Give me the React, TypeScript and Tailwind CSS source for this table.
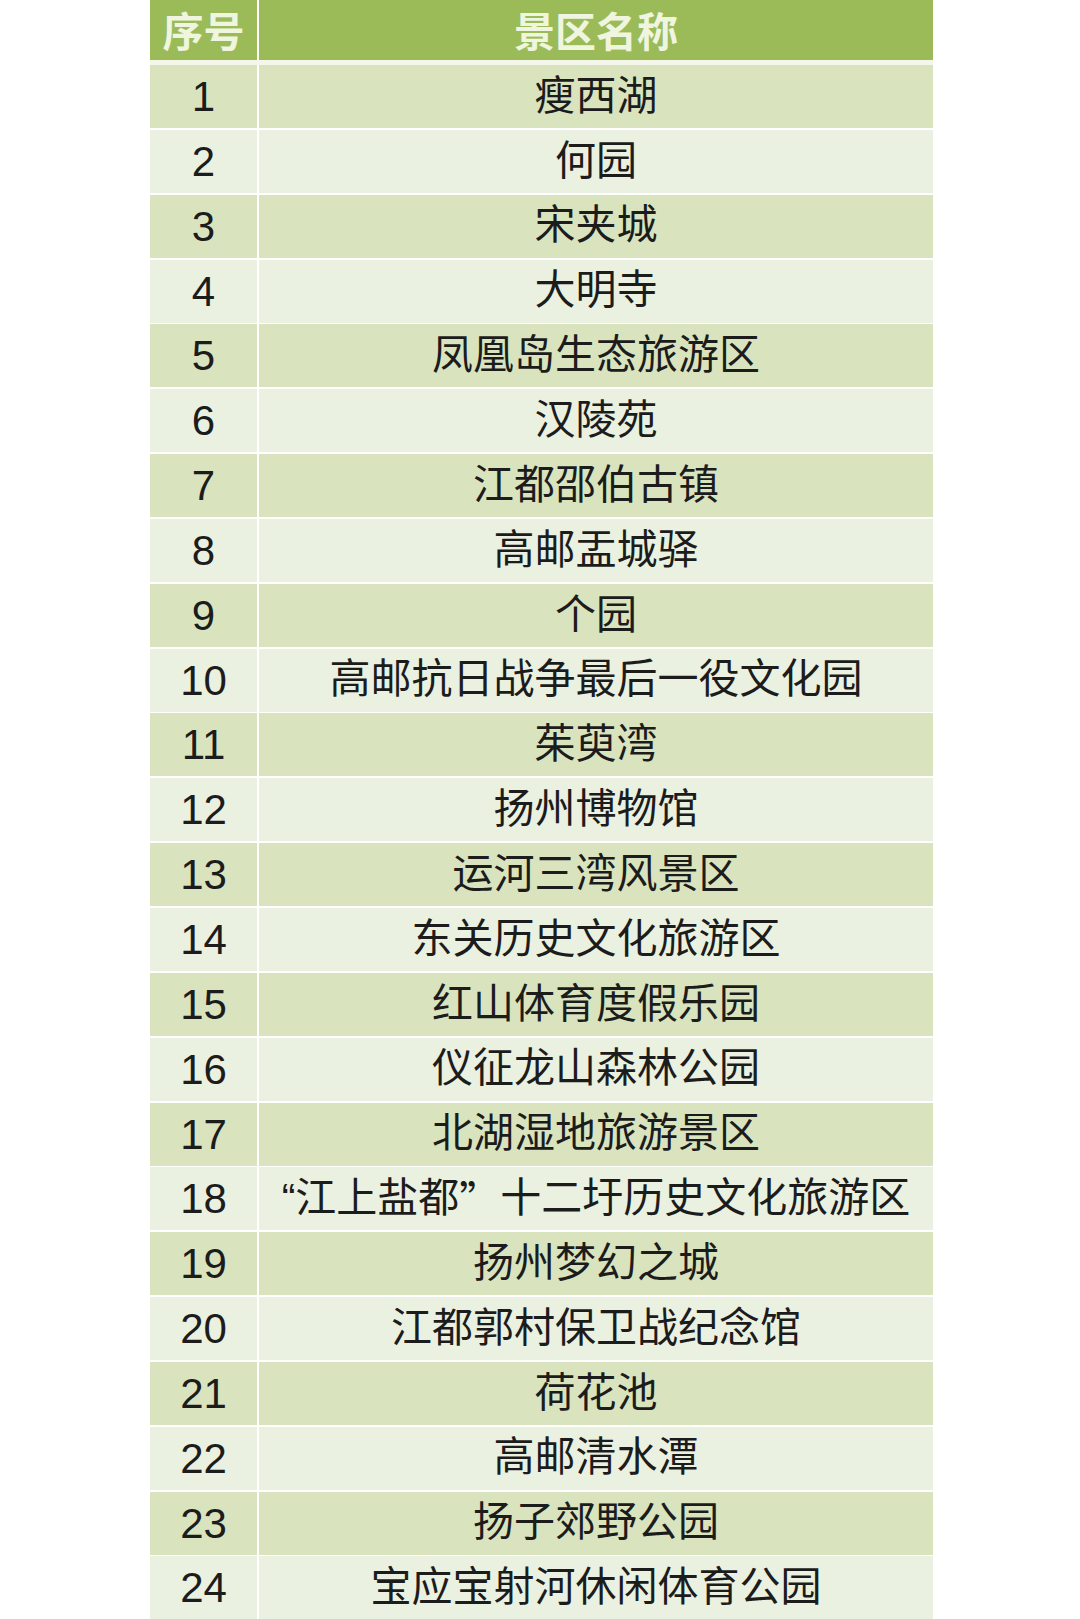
const spots: React.ReactNode[] = [
  "瘦西湖",
  "何园",
  "宋夹城",
  "大明寺",
  "凤凰岛生态旅游区",
  "汉陵苑",
  "江都邵伯古镇",
  "高邮盂城驿",
  "个园",
  "高邮抗日战争最后一役文化园",
  "茱萸湾",
  "扬州博物馆",
  "运河三湾风景区",
  "东关历史文化旅游区",
  "红山体育度假乐园",
  "仪征龙山森林公园",
  "北湖湿地旅游景区",
  <>
    “江上盐都<span style={{ fontFamily: '"Noto Sans CJK SC", sans-serif' }}>”</span>十二圩历史文化旅游区
  </>,
  "扬州梦幻之城",
  "江都郭村保卫战纪念馆",
  "荷花池",
  "高邮清水潭",
  "扬子郊野公园",
  "宝应宝射河休闲体育公园",
];

export default function App() {
  return (
    <div
      className="w-[1080px] h-[1619px] overflow-hidden bg-white pl-[150px]"
      style={{ fontFamily: '"Liberation Sans", "Noto Sans CJK SC", sans-serif' }}
    >
      <div className="w-[783px] flex flex-col">
        {/* header */}
        <div className="grid grid-cols-[107px_1fr] gap-[2px] bg-white">
          <div className="h-[60px] bg-[#9bbb59] flex items-center justify-center pt-[8px] text-[41px] font-bold text-[#eff5de]">
            序号
          </div>
          <div className="h-[60px] bg-[#9bbb59] flex items-center justify-center pt-[8px] text-[41px] font-bold text-[#eff5de]">
            景区名称
          </div>
        </div>
        <div className="h-[5px] bg-[#f3f6e8]" />
        <div className="flex flex-col gap-[2px] bg-white">
          {spots.map((name, i) => {
            const bg = i % 2 === 0 ? "bg-[#d9e4bf]" : "bg-[#ebf1e0]";
            return (
              <div key={i} className="grid grid-cols-[107px_1fr] gap-[2px] h-[62.85px]">
                <div className={`${bg} flex items-center justify-center text-[42px] text-[#1c1c1c]`}>
                  {i + 1}
                </div>
                <div className={`${bg} flex items-center justify-center text-[41px] text-[#1c1c1c] whitespace-nowrap`}>
                  {name}
                </div>
              </div>
            );
          })}
        </div>
      </div>
    </div>
  );
}
